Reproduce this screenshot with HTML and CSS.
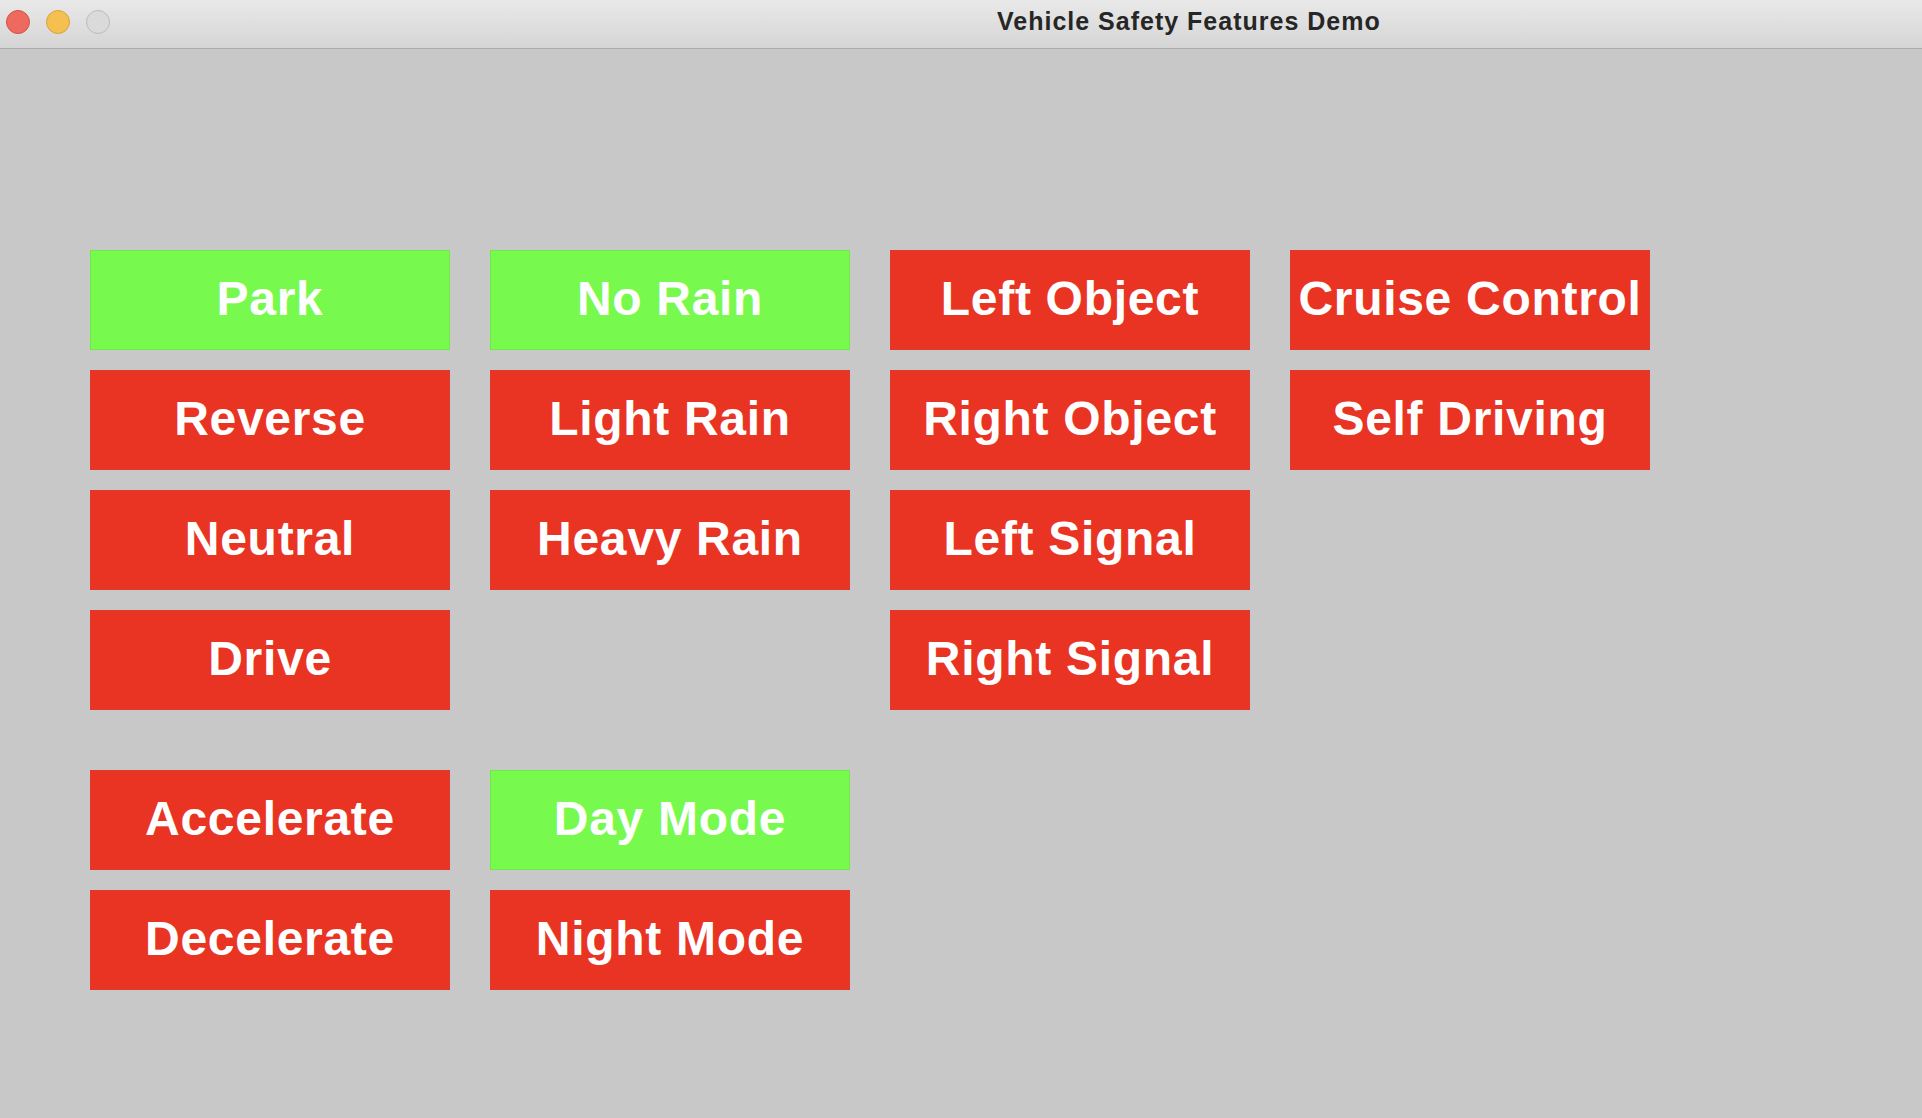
FILE: index.html
```html
<!DOCTYPE html>
<html>
<head>
<meta charset="utf-8">
<title>Vehicle Safety Features Demo</title>
<link rel="stylesheet" href="styles.css">
</head>
<body>
<div class="window">
  <div class="titlebar">
    <div class="lights">
      <span class="light close"></span>
      <span class="light min"></span>
      <span class="light max"></span>
    </div>
    <div class="title">Vehicle Safety Features Demo</div>
  </div>
  <div class="content">
    <div class="group">
      <div class="col">
        <div class="btn on">Park</div>
        <div class="btn">Reverse</div>
        <div class="btn">Neutral</div>
        <div class="btn">Drive</div>
      </div>
      <div class="col">
        <div class="btn on">No Rain</div>
        <div class="btn">Light Rain</div>
        <div class="btn">Heavy Rain</div>
      </div>
      <div class="col">
        <div class="btn">Left Object</div>
        <div class="btn">Right Object</div>
        <div class="btn">Left Signal</div>
        <div class="btn">Right Signal</div>
      </div>
      <div class="col">
        <div class="btn">Cruise Control</div>
        <div class="btn">Self Driving</div>
      </div>
    </div>
    <div class="group second">
      <div class="col">
        <div class="btn">Accelerate</div>
        <div class="btn">Decelerate</div>
      </div>
      <div class="col">
        <div class="btn on">Day Mode</div>
        <div class="btn">Night Mode</div>
      </div>
    </div>
  </div>
</div>
</body>
</html>
```
FILE: styles.css
```css
html, body {
  margin: 0;
  padding: 0;
  height: 100%;
}
body {
  background: #c8c8c8;
  font-family: "Liberation Sans", Arial, sans-serif;
  overflow: hidden;
}
.window {
  display: flex;
  flex-direction: column;
  height: 100%;
}
.titlebar {
  box-sizing: border-box;
  height: 49px;
  flex: 0 0 auto;
  display: flex;
  align-items: center;
  padding-bottom: 4px;
  background: linear-gradient(#e9e9e9, #d5d5d5);
  border-bottom: 1px solid #ababab;
}
.lights {
  display: flex;
  gap: 16px;
  padding-left: 6px;
}
.light {
  width: 22px;
  height: 22px;
  border-radius: 50%;
  border: 1px solid transparent;
  display: block;
}
.light.close {
  background: #ee6a5f;
  border-color: #d1544a;
}
.light.min {
  background: #f5c04f;
  border-color: #d7a23f;
}
.light.max {
  background: #dadada;
  border-color: #bcbcbc;
}
.title {
  margin-left: 887px;
  font-size: 25px;
  font-weight: bold;
  letter-spacing: 1px;
  color: #262626;
  padding-bottom: 2px;
}
.content {
  padding: 201px 0 0 90px;
  display: flex;
  flex-direction: column;
  gap: 60px;
}
.group {
  display: flex;
  gap: 40px;
  align-items: flex-start;
}
.col {
  display: flex;
  flex-direction: column;
  gap: 20px;
  width: 360px;
}
.btn {
  box-sizing: border-box;
  height: 100px;
  padding-bottom: 3px;
  background: #e93424;
  border: 1px solid #dc3a2e;
  color: #ffffff;
  font-size: 48px;
  font-weight: bold;
  letter-spacing: 0.7px;
  display: flex;
  align-items: center;
  justify-content: center;
  white-space: nowrap;
}
.btn.on {
  background: #78f94e;
  border-color: #70e84a;
}
```
